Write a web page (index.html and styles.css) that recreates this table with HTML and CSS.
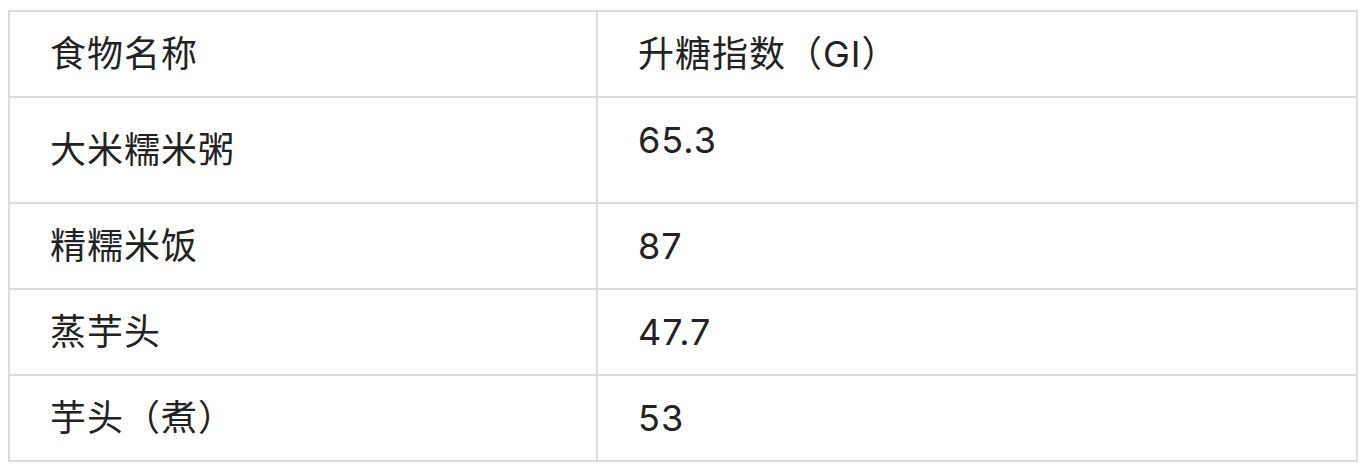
FILE: index.html
```html
<!DOCTYPE html>
<html lang="zh">
<head>
<meta charset="utf-8">
<link rel="stylesheet" href="styles.css">
</head>
<body>
<div class="wrap">
<table class="gi-table">
  <colgroup><col class="c-name"><col class="c-gi"></colgroup>
  <thead>
    <tr><th>食物名称</th><th>升糖指数（GI）</th></tr>
  </thead>
  <tbody>
    <tr><td>大米糯米粥</td><td class="tall">65.3</td></tr>
    <tr><td>精糯米饭</td><td>87</td></tr>
    <tr><td>蒸芋头</td><td>47.7</td></tr>
    <tr><td>芋头（煮）</td><td>53</td></tr>
  </tbody>
</table>
</div>
</body>
</html>
```

FILE: styles.css
```css
html, body {
  margin: 0;
  padding: 0;
  background: #ffffff;
}
.wrap {
  padding: 10px 0 0 8px;
}
.gi-table {
  border-collapse: collapse;
  table-layout: fixed;
  width: 1350px;
  font-family: "Inter", "Noto Sans CJK SC", sans-serif;
  font-size: 36px;
  color: #222222;
  letter-spacing: 1px;
}
.c-name { width: 588px; }
.gi-table th,
.gi-table td {
  border: 2px solid #dddddd;
  padding: 18px 40px;
  line-height: 48px;
  font-weight: 400;
  text-align: left;
  vertical-align: middle;
}
.gi-table td.tall {
  padding-bottom: 38px;
}
```
